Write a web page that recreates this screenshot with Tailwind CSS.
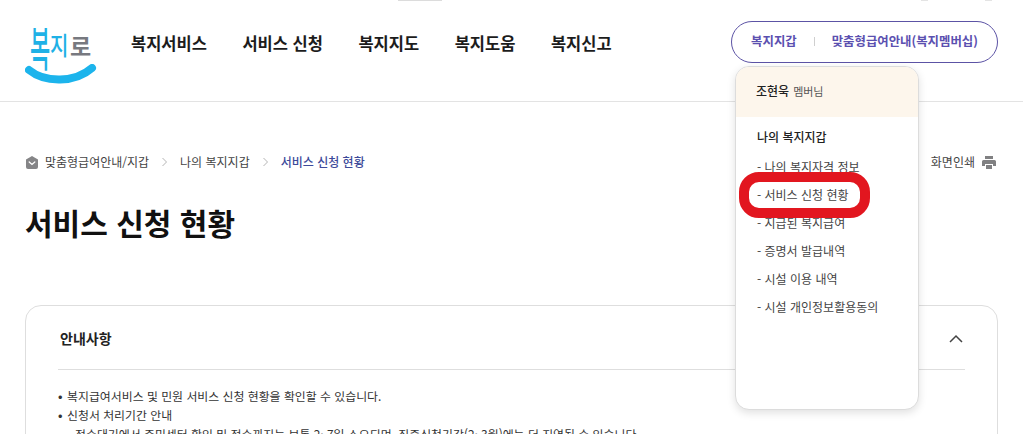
<!DOCTYPE html>
<html lang="ko">
  <head>
    <meta charset="UTF-8" />
    <meta name="viewport" content="width=device-width, initial-scale=1.0" />
    <title>서비스 신청 현황 - 복지로</title>
    <script src="https://cdn.jsdelivr.net/npm/@tailwindcss/browser@4"></script>
  </head>
  <body class="bg-white h-[434px] overflow-hidden relative font-['Noto_Sans_CJK_KR','Noto_Sans',sans-serif] text-[#222]">
    <!-- 상단에 살짝 보이는 유틸 메뉴 끝부분 -->
    <div class="absolute left-[398px] top-0 w-[44px] h-px bg-[#dcdcdc]"></div>
    <div class="absolute left-[921px] top-0 w-[7px] h-px bg-[#e4e4e4]"></div>
    <div class="absolute left-[985px] top-0 w-[7px] h-px bg-[#e4e4e4]"></div>

    <!-- 상단 헤더 -->
    <header class="h-[102px] border-b border-[#e3e3e3] flex items-center pl-[25px] pr-[25px]">
      <a href="#" class="relative block w-[72px] h-[66px] -mt-[3px] shrink-0">
        <span class="absolute left-[5px] top-[14px] text-[22px] leading-[30px] font-medium text-[#1fb1e6] scale-y-[2.1]">복</span>
        <span class="absolute left-[25px] top-[14px] text-[20px] leading-[30px] font-medium text-[#1fb1e6] scale-y-[1.25]">지</span>
        <span class="absolute left-[45px] top-[14px] text-[23px] leading-[30px] font-bold text-[#77797f]">로</span>
        <svg class="absolute left-0 top-[48px]" width="72" height="24" viewBox="0 0 72 24" fill="none">
          <path d="M4 6C20 19 50 19 67 4" stroke="#1cb4ec" stroke-width="8" stroke-linecap="round" />
        </svg>
      </a>
      <nav class="flex items-center gap-[35.5px] ml-[34px] text-[16.5px] font-bold text-[#1c1c1c] -mt-[15px]">
        <a href="#">복지서비스</a>
        <a href="#">서비스 신청</a>
        <a href="#">복지지도</a>
        <a href="#">복지도움</a>
        <a href="#">복지신고</a>
      </nav>
      <div class="ml-auto -mt-[18px] w-[267px] h-[42px] rounded-full border border-[#5c53a5] flex items-center justify-center text-[12.4px] font-bold text-[#5b50b0]">
        <a href="#">복지지갑</a>
        <span class="w-px h-[9px] bg-[#cfcfcf] mx-[17px]"></span>
        <a href="#">맞춤형급여안내(복지멤버십)</a>
      </div>
    </header>

    <main class="px-[25px]">
      <!-- 경로 -->
      <div class="flex items-center justify-between mt-[50px] h-[20px] text-[12px] text-[#444]">
        <div class="flex items-center">
          <svg width="14" height="15" viewBox="0 0 14 15" class="mr-[6px]">
            <path d="M7 1l6 3.400V12a2 2 0 0 1-2 2H3a2 2 0 0 1-2-2V4.400z" fill="#858587" />
            <path d="M4.200 7L7 9.500 9.800 7" fill="none" stroke="#fff" stroke-width="1.300" stroke-linecap="round" />
          </svg>
          <span>맞춤형급여안내/지갑</span>
          <svg width="7" height="10" viewBox="0 0 7 10" class="mx-[12px]" fill="none">
            <path d="M1.500 1l4 4-4 4" stroke="#b5b5b5" stroke-width="1" />
          </svg>
          <span>나의 복지지갑</span>
          <svg width="7" height="10" viewBox="0 0 7 10" class="mx-[12px]" fill="none">
            <path d="M1.500 1l4 4-4 4" stroke="#b5b5b5" stroke-width="1" />
          </svg>
          <span class="text-[#3d4a9a] font-medium">서비스 신청 현황</span>
        </div>
        <a href="#" class="flex items-center mr-[2px]">
          <span>화면인쇄</span>
          <svg width="14" height="13" viewBox="0 0 14 13" class="ml-[7px]">
            <path d="M3 0h8v3H3zM1.500 4h11A1.500 1.500 0 0 1 14 5.500V10h-3V8H3v2H0V5.500A1.500 1.500 0 0 1 1.500 4zM4 9h6v4H4z" fill="#808082" />
          </svg>
        </a>
      </div>

      <h1 class="mt-[27px] text-[30px] leading-[46px] font-bold text-[#111]">서비스 신청 현황</h1>

      <!-- 안내사항 -->
      <section class="mt-[60px] border border-[#dedede] rounded-[16px] h-[200px] px-[32px]">
        <div class="h-[64px] flex items-center justify-between border-b border-[#dedede] pl-[2px]">
          <h2 class="mt-[2px] text-[14px] font-bold text-[#222]">안내사항</h2>
          <svg width="16" height="10" viewBox="0 0 16 10" fill="none" class="mr-[1px] mt-[3px]">
            <path d="M2 8l6-6 6 6" stroke="#444" stroke-width="1.500" />
          </svg>
        </div>
        <ul class="mt-[16px] text-[11.9px] leading-[19px] text-[#333]">
          <li class="flex"><span class="w-[9px] font-bold">•</span>복지급여서비스 및 민원 서비스 신청 현황을 확인할 수 있습니다.</li>
          <li class="flex"><span class="w-[9px] font-bold">•</span>신청서 처리기간 안내</li>
          <li class="pl-[17px]">접수대기에서 주민센터 확인 및 접수까지는 보통 2~7일 소요되며, 집중신청기간(2~3월)에는 더 지연될 수 있습니다.</li>
        </ul>
      </section>
    </main>

    <!-- 복지지갑 드롭다운 -->
    <div class="absolute left-[735px] top-[66px] w-[184px] h-[344px] bg-white border border-[#dcdcdc] rounded-[14px] shadow-[0_3px_8px_rgba(0,0,0,0.12)] overflow-hidden">
      <div class="h-[50px] pb-[2px] bg-[#fdf6ec] flex items-center pl-[20px] text-[12px] font-medium text-[#222]">
        조현욱 <span class="ml-[4px] text-[11px] font-normal text-[#555]">멤버님</span>
      </div>
      <p class="mt-[11px] pl-[21px] text-[12px] leading-[18px] font-medium text-[#222]">나의 복지지갑</p>
      <ul class="mt-[7px] pl-[21px] text-[12px] text-[#444]">
        <li class="h-[28px] leading-[28px]">- 나의 복지자격 정보</li>
        <li class="h-[28px] leading-[28px]">- 서비스 신청 현황</li>
        <li class="h-[28px] leading-[28px]">- 지급된 복지급여</li>
        <li class="h-[28px] leading-[28px]">- 증명서 발급내역</li>
        <li class="h-[28px] leading-[28px]">- 시설 이용 내역</li>
        <li class="h-[28px] leading-[28px]">- 시설 개인정보활용동의</li>
      </ul>
    </div>

    <!-- 강조 표시 -->
    <div class="absolute left-[739px] top-[172px] w-[131px] h-[46px] border-[10px] border-[#e2161f] rounded-[20px]"></div>
  </body>
</html>
